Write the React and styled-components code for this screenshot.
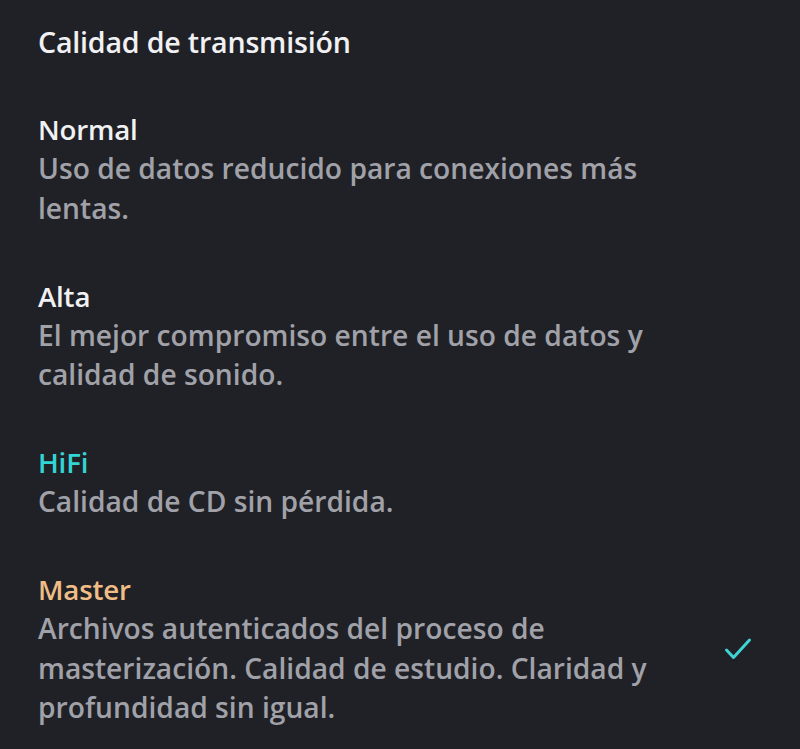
import React from "react";
import styled, { createGlobalStyle } from "styled-components";

const Global = createGlobalStyle`
  html, body {
    margin: 0;
    padding: 0;
    background: #202126;
  }
  body {
    font-family: "Open Sans", "Noto Sans", sans-serif;
    -webkit-font-smoothing: antialiased;
  }
`;

const Page = styled.div`
  min-height: 749px;
  box-sizing: border-box;
  background: #202126;
  padding: 22px 48px 0 38px;
  display: flex;
  flex-direction: column;
  gap: 49px;
`;

const Heading = styled.h2`
  margin: 0;
  font-size: 28.6px;
  line-height: 39px;
  font-weight: 600;
  letter-spacing: -0.2px;
  color: #f1f1f3;
`;

const List = styled.div`
  display: flex;
  flex-direction: column;
  gap: 48.5px;
`;

const Option = styled.div`
  display: flex;
  align-items: center;
  justify-content: space-between;
`;

const Text = styled.div`
  width: 660px;
  display: flex;
  flex-direction: column;
`;

const Title = styled.div`
  font-size: 27.7px;
  line-height: 39px;
  font-weight: 600;
  letter-spacing: -0.2px;
  color: ${(p) => p.$color || "#f1f1f3"};
`;

const Desc = styled.div`
  font-size: 28.2px;
  line-height: 39.5px;
  font-weight: 600;
  color: #a1a2a9;
`;

const Check = styled.svg`
  width: 28px;
  height: 24px;
  flex: none;
`;

const options = [
  {
    title: "Normal",
    desc: "Uso de datos reducido para conexiones más lentas.",
  },
  {
    title: "Alta",
    desc: "El mejor compromiso entre el uso de datos y calidad de sonido.",
  },
  { title: "HiFi", color: "#33d4d4", desc: "Calidad de CD sin pérdida." },
  {
    title: "Master",
    color: "#f0bd86",
    desc:
      "Archivos autenticados del proceso de masterización. Calidad de estudio. Claridad y profundidad sin igual.",
    selected: true,
  },
];

export default function App() {
  return (
    <>
      <Global />
      <Page>
        <Heading>Calidad de transmisión</Heading>
        <List>
          {options.map((o) => (
            <Option key={o.title}>
              <Text>
                <Title $color={o.color}>{o.title}</Title>
                <Desc>{o.desc}</Desc>
              </Text>
              {o.selected && (
                <Check viewBox="0 0 28 24" fill="none">
                  <path
                    d="M2.5 13 L9.5 20.5 L25.5 3"
                    stroke="#3fd3d3"
                    strokeWidth="3"
                    strokeLinecap="round"
                    strokeLinejoin="round"
                  />
                </Check>
              )}
            </Option>
          ))}
        </List>
      </Page>
    </>
  );
}
